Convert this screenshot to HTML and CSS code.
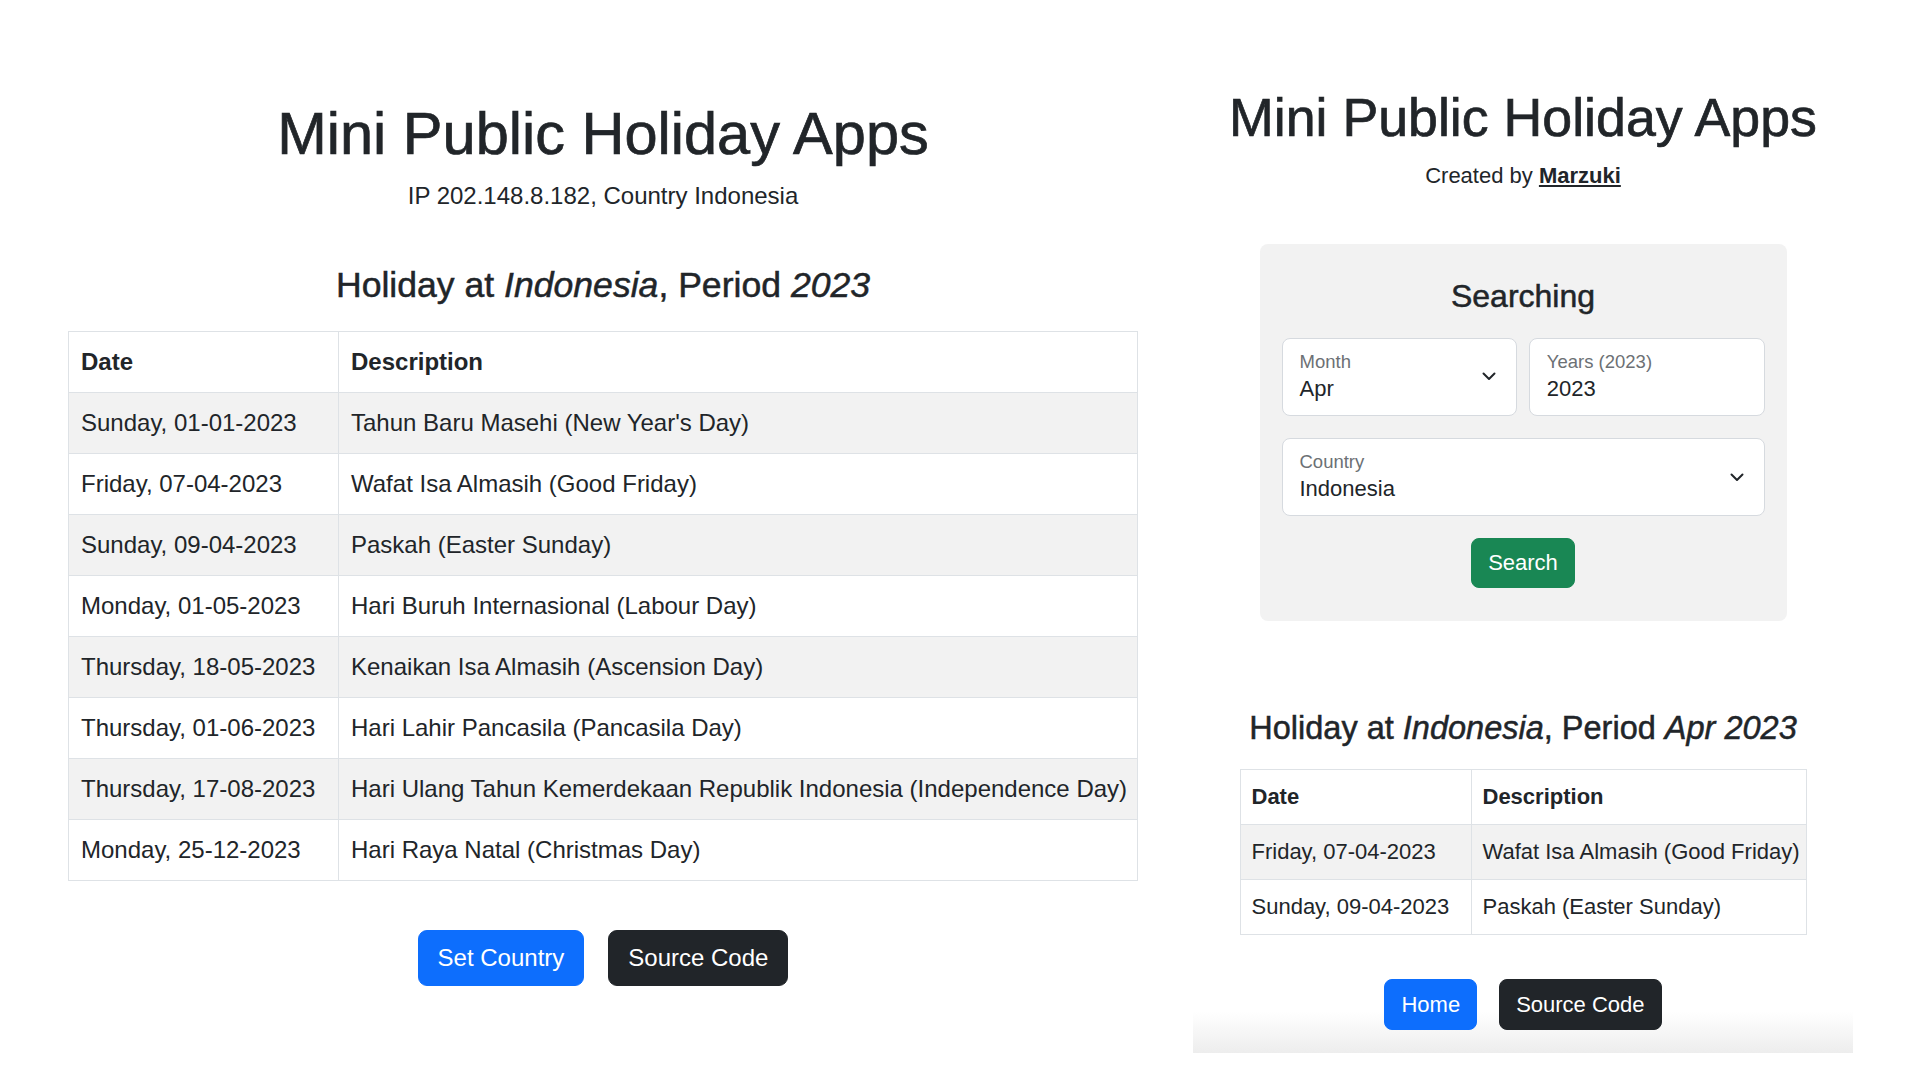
FILE: index.html
```html
<!DOCTYPE html>
<html lang="en">
<head>
<meta charset="utf-8">
<title>Mini Public Holiday Apps</title>
<link rel="stylesheet" href="styles.css">
</head>
<body>
<div class="page">
  <section class="shot shot-left">
    <h1 class="title title-l">Mini Public Holiday Apps</h1>
    <p class="sub sub-l">IP 202.148.8.182, Country Indonesia</p>
    <h4 class="heading heading-l">Holiday at <em>Indonesia</em>, Period <em>2023</em></h4>
    <table class="tbl tbl-l">
      <thead>
        <tr><th class="c1">Date</th><th>Description</th></tr>
      </thead>
      <tbody>
        <tr><td>Sunday, 01-01-2023</td><td>Tahun Baru Masehi (New Year's Day)</td></tr>
        <tr><td>Friday, 07-04-2023</td><td>Wafat Isa Almasih (Good Friday)</td></tr>
        <tr><td>Sunday, 09-04-2023</td><td>Paskah (Easter Sunday)</td></tr>
        <tr><td>Monday, 01-05-2023</td><td>Hari Buruh Internasional (Labour Day)</td></tr>
        <tr><td>Thursday, 18-05-2023</td><td>Kenaikan Isa Almasih (Ascension Day)</td></tr>
        <tr><td>Thursday, 01-06-2023</td><td>Hari Lahir Pancasila (Pancasila Day)</td></tr>
        <tr><td>Thursday, 17-08-2023</td><td>Hari Ulang Tahun Kemerdekaan Republik Indonesia (Independence Day)</td></tr>
        <tr><td>Monday, 25-12-2023</td><td>Hari Raya Natal (Christmas Day)</td></tr>
      </tbody>
    </table>
    <div class="btns btns-l">
      <a class="btn btn-l btn-primary" href="#">Set Country</a>
      <a class="btn btn-l btn-dark" href="#">Source Code</a>
    </div>
  </section>

  <section class="shot shot-right">
    <h1 class="title title-r">Mini Public Holiday Apps</h1>
    <p class="sub sub-r">Created by <a class="author" href="#">Marzuki</a></p>
    <div class="search-panel">
      <h4 class="search-title">Searching</h4>
      <div class="field-row">
        <div class="field">
          <div class="field-text">
            <span class="field-label">Month</span>
            <span class="field-value">Apr</span>
          </div>
          <svg class="chev" width="14" height="9" viewBox="0 0 14 9"><path d="M1.5 1.5 7 7l5.5-5.5" fill="none" stroke="#212529" stroke-width="2" stroke-linecap="round" stroke-linejoin="round"/></svg>
        </div>
        <div class="field">
          <div class="field-text">
            <span class="field-label">Years (2023)</span>
            <span class="field-value">2023</span>
          </div>
        </div>
      </div>
      <div class="field field-wide">
        <div class="field-text">
          <span class="field-label">Country</span>
          <span class="field-value">Indonesia</span>
        </div>
        <svg class="chev" width="14" height="9" viewBox="0 0 14 9"><path d="M1.5 1.5 7 7l5.5-5.5" fill="none" stroke="#212529" stroke-width="2" stroke-linecap="round" stroke-linejoin="round"/></svg>
      </div>
      <div class="search-btn-wrap">
        <a class="btn btn-r btn-success" href="#">Search</a>
      </div>
    </div>
    <h4 class="heading heading-r">Holiday at <em>Indonesia</em>, Period <em>Apr 2023</em></h4>
    <table class="tbl tbl-r">
      <thead>
        <tr><th class="c1">Date</th><th>Description</th></tr>
      </thead>
      <tbody>
        <tr><td>Friday, 07-04-2023</td><td>Wafat Isa Almasih (Good Friday)</td></tr>
        <tr><td>Sunday, 09-04-2023</td><td>Paskah (Easter Sunday)</td></tr>
      </tbody>
    </table>
    <div class="btns btns-r">
      <a class="btn btn-r btn-primary" href="#">Home</a>
      <a class="btn btn-r btn-dark" href="#">Source Code</a>
    </div>
  </section>
</div>
</body>
</html>
```

FILE: styles.css
```css
html, body {
  margin: 0;
  padding: 0;
  background: #ffffff;
}

body {
  font-family: "Liberation Sans", Arial, sans-serif;
  color: #212529;
}

.page {
  display: flex;
  width: 1920px;
  height: 1080px;
  overflow: hidden;
}

.shot {
  display: flex;
  flex-direction: column;
  align-items: center;
  box-sizing: border-box;
}

/* ---------- left screenshot ---------- */
.shot-left {
  width: 1193px;
  padding-left: 13px;
  padding-top: 98px;
}

.title {
  margin: 0;
  font-weight: 500;
  white-space: nowrap;
  -webkit-text-stroke: 0.7px #212529;
}

.title-l {
  font-size: 59.5px;
  line-height: 71px;
}

.sub {
  margin: 0;
  white-space: nowrap;
}

.sub-l {
  font-size: 24px;
  line-height: 36px;
  margin-top: 9px;
}

.heading {
  margin: 0;
  font-weight: 500;
  white-space: nowrap;
  -webkit-text-stroke: 0.5px #212529;
}

.heading-l {
  font-size: 35.6px;
  line-height: 43px;
  margin-top: 50px;
}

.tbl {
  border-collapse: collapse;
  table-layout: fixed;
}

.tbl th,
.tbl td {
  border: 1px solid #dee2e6;
  text-align: left;
  white-space: nowrap;
  vertical-align: top;
}

.tbl th {
  font-weight: 700;
  background: #ffffff;
}

.tbl tbody tr:nth-child(odd) td {
  background: #f2f2f2;
}

.tbl tbody tr:nth-child(even) td {
  background: #ffffff;
}

.tbl-l {
  width: 1070px;
  margin-top: 23.5px;
  font-size: 24px;
  line-height: 36px;
}

.tbl-l th,
.tbl-l td {
  padding: 12px 12px;
}

.tbl-l .c1 {
  width: 245px;
}

.btns {
  display: flex;
  justify-content: center;
}

.btns-l {
  margin-top: 49px;
  gap: 24px;
}

.btn {
  display: inline-block;
  color: #ffffff;
  text-decoration: none;
  border: 1px solid transparent;
  white-space: nowrap;
}

.btn-l {
  font-size: 24px;
  line-height: 36px;
  padding: 9px 19px;
  border-radius: 9px;
}

.btn-primary {
  background: #0d6efd;
  border-color: #0d6efd;
}

.btn-dark {
  background: #212529;
  border-color: #212529;
}

.btn-success {
  background: #198754;
  border-color: #198754;
}

/* ---------- right screenshot ---------- */
.shot-right {
  width: 660px;
  height: 1053px;
  padding-top: 85px;
  background: linear-gradient(to bottom, #ffffff 0, #ffffff 1012px, #ededed 1053px);
}

.title-r {
  font-size: 53.7px;
  line-height: 64px;
}

.sub-r {
  font-size: 22px;
  line-height: 33px;
  margin-top: 10px;
}

.author {
  color: #212529;
  font-weight: 700;
  text-decoration: underline;
}

.search-panel {
  width: 527px;
  box-sizing: border-box;
  margin-top: 52px;
  padding: 33px 22px 33px;
  background: #f2f2f2;
  border-radius: 8px;
}

.search-title {
  margin: 0;
  font-size: 32px;
  line-height: 38px;
  font-weight: 500;
  text-align: center;
  -webkit-text-stroke: 0.5px #212529;
}

.field-row {
  display: flex;
  gap: 11.6px;
  margin-top: 22.7px;
}

.field {
  flex: 1;
  display: flex;
  align-items: center;
  height: 78px;
  box-sizing: border-box;
  padding: 0 20px 0 17px;
  background: #ffffff;
  border: 1px solid #d6dadf;
  border-radius: 8px;
}

.field-wide {
  margin-top: 22.6px;
}

.field-text {
  flex: 1;
  display: flex;
  flex-direction: column;
  align-self: flex-start;
  padding-top: 12px;
}

.field-label {
  font-size: 18.5px;
  line-height: 22px;
  color: #6c7074;
}

.field-value {
  font-size: 22px;
  line-height: 28px;
  margin-top: 2px;
  color: #212529;
}

.chev {
  flex: none;
  display: block;
}

.search-btn-wrap {
  display: flex;
  justify-content: center;
  margin-top: 22px;
}

.btn-r {
  font-size: 22px;
  line-height: 32px;
  padding: 8px 16px;
  border-radius: 8px;
}

.heading-r {
  font-size: 32.5px;
  line-height: 39px;
  margin-top: 88px;
}

.tbl-r {
  width: 567px;
  margin-top: 21px;
  font-size: 22px;
  line-height: 32px;
}

.tbl-r th,
.tbl-r td {
  padding: 11px 11px;
}

.tbl-r .c1 {
  width: 208px;
}

.btns-r {
  margin-top: 44px;
  gap: 22px;
}

.btns-r .btn-r {
  line-height: 33px;
}
```
